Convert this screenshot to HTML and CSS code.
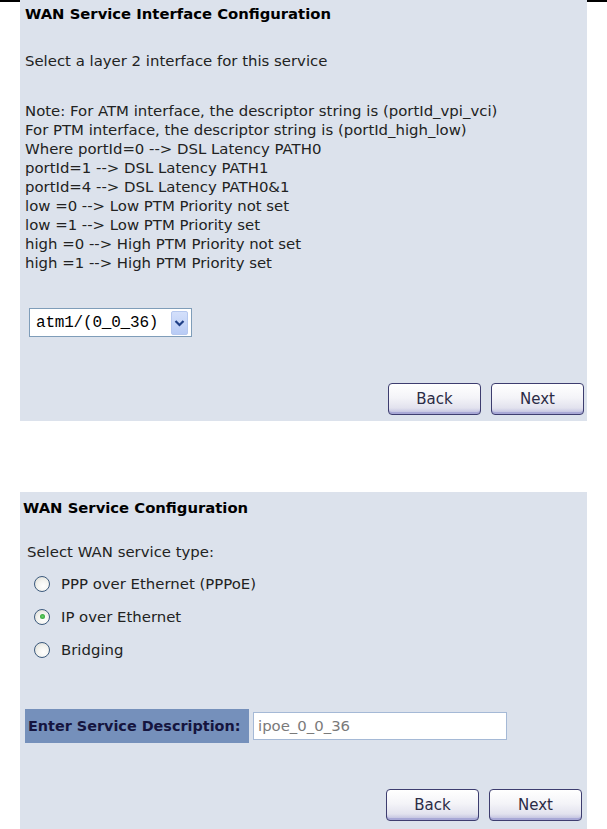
FILE: index.html
```html
<!DOCTYPE html>
<html>
<head>
<meta charset="utf-8">
<title>WAN Service</title>
<link rel="stylesheet" href="styles.css">
</head>
<body>
<div class="row-top">
  <div class="gutter"></div>
  <section class="panel panel-iface">
    <h1 class="title">WAN Service Interface Configuration</h1>
    <p class="lead">Select a layer 2 interface for this service</p>
    <div class="notes">
      <div>Note: For ATM interface, the descriptor string is (portId_vpi_vci)</div>
      <div>For PTM interface, the descriptor string is (portId_high_low)</div>
      <div>Where portId=0 --&gt; DSL Latency PATH0</div>
      <div>portId=1 --&gt; DSL Latency PATH1</div>
      <div>portId=4 --&gt; DSL Latency PATH0&amp;1</div>
      <div>low =0 --&gt; Low PTM Priority not set</div>
      <div>low =1 --&gt; Low PTM Priority set</div>
      <div>high =0 --&gt; High PTM Priority not set</div>
      <div>high =1 --&gt; High PTM Priority set</div>
    </div>
    <div class="select">
      <span class="select-text">atm1/(0_0_36)</span>
      <span class="select-arrow">
        <svg width="11" height="8" viewBox="0 0 11 8"><path d="M1.5 2 L5.5 6 L9.5 2" fill="none" stroke="#1f3f86" stroke-width="2.2"/></svg>
      </span>
    </div>
    <div class="actions">
      <button class="btn">Back</button>
      <button class="btn">Next</button>
    </div>
  </section>
  <div class="gutter"></div>
</div>

<div class="row-bottom">
  <section class="panel panel-service">
    <h1 class="title title-2">WAN Service Configuration</h1>
    <div class="form">
      <p class="lead lead-2">Select WAN service type:</p>
      <label class="radio-row"><span class="radio"></span>PPP over Ethernet (PPPoE)</label>
      <label class="radio-row"><span class="radio checked"></span>IP over Ethernet</label>
      <label class="radio-row"><span class="radio"></span>Bridging</label>
      <div class="desc-row">
        <span class="desc-label">Enter Service Description:</span>
        <span class="desc-input">ipoe_0_0_36</span>
      </div>
    </div>
    <div class="actions actions-2">
      <button class="btn">Back</button>
      <button class="btn">Next</button>
    </div>
  </section>
</div>
</body>
</html>
```

FILE: styles.css
```css
html, body {
  margin: 0;
  padding: 0;
  background: #ffffff;
}
body {
  font-family: "DejaVu Sans", Verdana, sans-serif;
  font-size: 14.9px;
  color: #222;
  width: 607px;
  height: 829px;
  overflow: hidden;
}
.row-top {
  display: flex;
}
.gutter {
  width: 20px;
  border-top: 2px solid #000;
  align-self: flex-start;
}
.panel {
  width: 567px;
  background: #dce2ec;
  box-sizing: border-box;
}
.panel-iface {
  padding: 4px 3px 6px 5px;
}
.row-bottom {
  padding: 71px 0 0 20px;
}
.panel-service {
  padding: 6px 3px 20px 3px;
}
.title {
  margin: 0;
  font-size: 14.8px;
  font-weight: bold;
  line-height: 19px;
  color: #000;
}
.lead {
  margin: 29px 0 0 0;
  line-height: 19px;
}
.notes {
  margin-top: 31px;
  line-height: 19px;
}
.select {
  margin: 35px 0 0 4px;
  width: 163px;
  height: 29px;
  box-sizing: border-box;
  border: 1px solid #7f9db9;
  background: #fff;
  display: flex;
  align-items: center;
  justify-content: space-between;
  padding: 0 3px 0 6px;
}
.select-text {
  font-family: "Liberation Mono", "DejaVu Sans Mono", monospace;
  font-size: 16px;
  color: #000;
  letter-spacing: -0.2px;
}
.select-arrow {
  width: 17px;
  height: 24px;
  background: linear-gradient(#d4e0fb, #b8cbf5);
  border: 1px solid #b6c8ef;
  border-radius: 2px;
  box-sizing: border-box;
  display: flex;
  align-items: center;
  justify-content: center;
}
.actions {
  display: flex;
  justify-content: flex-end;
  gap: 10px;
  margin-top: 46px;
}
.btn {
  width: 93px;
  height: 32px;
  box-sizing: border-box;
  border: 1px solid #3d3d6f;
  border-radius: 4px;
  background: linear-gradient(#ffffff 0%, #f4f4f8 45%, #e2e2ee 80%, #b8b8dc 100%);
  box-shadow: inset 0 -2px 0 #a8a8d6;
  font-family: "DejaVu Sans", Verdana, sans-serif;
  font-size: 15px;
  color: #2b2b45;
  padding: 0;
}
.form {
  padding-left: 4px;
}
.lead-2 {
  margin-top: 26px;
}
.radio-row {
  display: flex;
  align-items: center;
  height: 33px;
  padding-left: 7px;
}
.radio-row:first-of-type {
  margin-top: 5px;
}
.radio {
  width: 14px;
  height: 14px;
  border-radius: 50%;
  border: 1px solid #3c5a7d;
  background: radial-gradient(circle at 60% 65%, #ffffff 0%, #f4f4f0 45%, #d8d8d0 100%);
  margin-right: 11px;
  display: flex;
  align-items: center;
  justify-content: center;
  flex: none;
}
.radio.checked::after {
  content: "";
  width: 5px;
  height: 5px;
  border-radius: 50%;
  background: radial-gradient(circle, #6ad06a, #1f9a2a);
}
.desc-row {
  display: flex;
  align-items: center;
  margin-top: 43px;
  margin-left: -2px;
}
.desc-label {
  background: #7590bb;
  color: #15153f;
  font-weight: bold;
  font-size: 14.4px;
  height: 34px;
  line-height: 34px;
  padding: 0 0 0 3px;
  width: 224px;
  box-sizing: border-box;
  white-space: nowrap;
}
.desc-input {
  margin-left: 4px;
  width: 254px;
  height: 28px;
  box-sizing: border-box;
  border: 1px solid #a5b9d6;
  background: #fff;
  color: #7a7a7a;
  line-height: 26px;
  padding-left: 4px;
}
.actions-2 {
  margin-top: 46px;
  padding-right: 2px;
}
```
